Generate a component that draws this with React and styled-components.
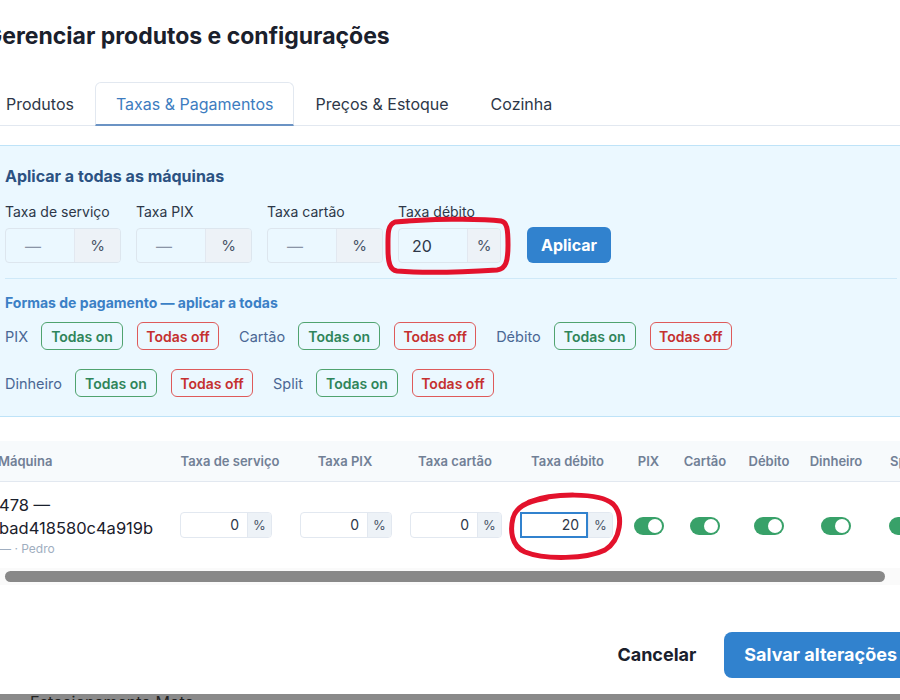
import React from 'react'
import styled, { createGlobalStyle, css } from 'styled-components'

const GlobalStyle = createGlobalStyle`
  html, body {
    margin: 0;
    padding: 0;
    background: #ffffff;
    overflow: hidden;
    font-family: Inter, "Noto Sans", "Liberation Sans", sans-serif;
    color: #1a202c;
  }
  * { box-sizing: border-box; }
`

const Page = styled.div`
  width: 900px;
  height: 700px;
  overflow: hidden;
`

const Modal = styled.div`
  width: 932px;
  margin-left: -15px;
  padding: 22px 0 18px;
  background: #fff;
`

const Title = styled.h2`
  margin: 0;
  font-size: 23px;
  line-height: 28px;
  font-weight: 700;
  color: #1a202c;
`

const TabList = styled.div`
  display: flex;
  margin-top: 32px;
  border-bottom: 1px solid #e2e8f0;
`

const Tab = styled.div`
  height: 44px;
  display: flex;
  align-items: center;
  padding: 0 20px;
  font-size: 16px;
  color: #2d3748;
  border: 1px solid transparent;
  border-radius: 6px 6px 0 0;
  margin-bottom: -1px;
  ${p => p.$active && css`
    color: #3d7cc0;
    border-color: #e2e8f0;
    border-bottom: 2px solid #6b93c4;
    background: #fff;
  `}
`

const Panel = styled.section`
  margin-top: 19px;
  background: #ebf8ff;
  border-top: 1px solid #bee3f8;
  border-bottom: 1px solid #bee3f8;
  padding: 20px 20px 19px;
`

const PanelTitle = styled.h3`
  margin: 0;
  font-size: 16px;
  line-height: 20px;
  font-weight: 700;
  color: #2c5282;
`

const FieldRow = styled.div`
  display: flex;
  align-items: flex-end;
  gap: 15px;
  margin-top: 18px;
`

const Field = styled.div`
  position: relative;
  display: flex;
  flex-direction: column;
  gap: 8px;
  width: ${p => p.$w || 116}px;
`

const Label = styled.span`
  font-size: 14px;
  line-height: 16px;
  color: #2d3748;
  white-space: nowrap;
`

const InputGroup = styled.div`
  display: flex;
  height: ${p => (p.$small ? 26 : 35)}px;
  width: ${p => p.$w}px;
  border: 1px solid ${p => (p.$small ? '#e2e8f0' : '#dde6ee')};
  border-radius: 4px;
  background: ${p => (p.$small ? '#fff' : 'transparent')};
`

const Input = styled.div`
  flex: 1;
  display: flex;
  align-items: center;
  font-size: ${p => (p.$small ? 14 : 16)}px;
  color: ${p => (p.$placeholder ? '#8a94a6' : '#2d3748')};
  ${p => p.$small
    ? css`justify-content: flex-end; padding-right: 8px;`
    : css`padding-left: ${p.$placeholder ? 19 : 13}px;`}
  ${p => p.$focus && css`
    border: 2px solid #3182ce;
    margin: -1px 0 -1px -1px;
    padding-right: 7px;
  `}
`

const Addon = styled.div`
  width: ${p => p.$w || (p.$small ? 24 : 46)}px;
  display: flex;
  align-items: center;
  justify-content: center;
  background: #edf2f7;
  border-left: 1px solid #e2e8f0;
  border-radius: 0 3px 3px 0;
  font-size: ${p => (p.$small ? 13 : 15)}px;
  color: #4a5568;
`

const PrimaryButton = styled.button`
  border: none;
  background: #3182ce;
  color: #fff;
  font-family: inherit;
  font-weight: 700;
  font-size: ${p => (p.$big ? 18 : 16)}px;
  height: ${p => (p.$big ? 46 : 36)}px;
  padding: 0 ${p => (p.$big ? 20 : 14)}px;
  border-radius: ${p => (p.$big ? 8 : 6)}px;
  margin-left: ${p => (p.$big ? 0 : 11)}px;
`

const Divider = styled.hr`
  margin: 15px 0 0;
  border: none;
  border-top: 1px solid #cfe9f8;
`

const SubTitle = styled.div`
  margin-top: 15px;
  font-size: 14px;
  line-height: 18px;
  font-weight: 700;
  color: #3b80c6;
`

const PayRows = styled.div`
  display: flex;
  flex-wrap: wrap;
  column-gap: 20px;
  row-gap: 19px;
  margin-top: 10px;
`

const PayItem = styled.div`
  display: flex;
  align-items: center;
  gap: 14px;
`

const PayLabel = styled.span`
  font-size: 14.5px;
  color: #4a6794;
  margin-right: -1px;
`

const BulkButton = styled.button`
  width: 82px;
  height: 28px;
  padding: 0;
  border-radius: 6px;
  background: transparent;
  font-family: inherit;
  font-size: 14px;
  font-weight: 600;
  border: 1.5px solid ${p => (p.$on ? '#4fa36f' : '#de5a5a')};
  color: ${p => (p.$on ? '#2f855a' : '#c53030')};
`

const TableWrap = styled.div`
  margin-top: 24px;
  overflow: hidden;
`

const Table = styled.table`
  width: 951px;
  table-layout: fixed;
  border-collapse: collapse;
`

const Th = styled.th`
  height: 40px;
  padding: 0 ${p => (p.$left ? 13 : 2)}px;
  background: #f7fafc;
  border-bottom: 1px solid #e2e8f0;
  font-size: 13px;
  font-weight: 600;
  color: #718096;
  text-align: ${p => (p.$left ? 'left' : 'center')};
  white-space: nowrap;
`

const Td = styled.td`
  position: relative;
  padding: ${p => (p.$left ? '12px 12px 10px 14px' : p.$input ? '0 0 0 10px' : '0')};
  text-align: ${p => (p.$center ? 'center' : 'left')};
  vertical-align: middle;
`

const MachineName = styled.div`
  font-size: 16.5px;
  line-height: 23px;
  color: #1a202c;
`

const MachineSub = styled.div`
  font-size: 12px;
  line-height: 18px;
  color: #a0aec0;
`

const Toggle = styled.span`
  display: inline-block;
  position: relative;
  width: 30px;
  height: 18px;
  border-radius: 9px;
  background: #38a169;
  vertical-align: middle;
  &::after {
    content: '';
    position: absolute;
    top: 2px;
    left: 14px;
    width: 14px;
    height: 14px;
    border-radius: 50%;
    background: #fff;
  }
`

const ScrollTrack = styled.div`
  height: 17px;
  background: #fafafa;
  padding: 3px 0 3px 20px;
`

const ScrollThumb = styled.div`
  width: 880px;
  height: 11px;
  border-radius: 6px;
  background: #888;
`

const Footer = styled.div`
  display: flex;
  justify-content: flex-end;
  align-items: center;
  gap: 8px;
  margin-top: 47px;
`

const GhostButton = styled.button`
  height: 46px;
  padding: 0 20px;
  border: none;
  background: transparent;
  font-family: inherit;
  font-size: 18px;
  font-weight: 700;
  color: #1a202c;
`

const Backdrop = styled.div`
  height: 40px;
  background: #8a8a8a;
  padding-left: 30px;
  font-size: 16px;
  line-height: 16px;
  color: #222;
  & > span { display: block; margin-top: -2px; }
`

const Mark = styled.svg`
  position: absolute;
  left: ${p => p.$x}px;
  top: ${p => p.$y}px;
  pointer-events: none;
  overflow: visible;
`

const RectMark = () => (
  <Mark $x={-13} $y={13} width="126" height="58" viewBox="0 0 126 58">
    <path
      d="M10 5 C40 2 95 1 116 4 C122 5 123 12 123 28 C123 44 121 52 112 53 C80 55 35 56 12 54 C5 53 3 46 3 32 C3 18 2 8 10 5 L24 4"
      fill="none" stroke="#e3122c" strokeWidth="5" strokeLinecap="round" strokeLinejoin="round"
    />
  </Mark>
)

const OvalMark = () => (
  <Mark $x={-3} $y={8} width="118" height="72" viewBox="0 0 118 72">
    <path
      d="M22 12 C45 3 92 2 106 14 C117 25 114 50 98 60 C80 69 38 70 18 62 C4 56 3 40 6 28 C8 20 14 14 30 10 L40 8"
      fill="none" stroke="#e3122c" strokeWidth="5" strokeLinecap="round" strokeLinejoin="round"
    />
  </Mark>
)

const tabs = ['Produtos', 'Taxas & Pagamentos', 'Preços & Estoque', 'Cozinha']
const fees = [
  { label: 'Taxa de serviço', value: '' },
  { label: 'Taxa PIX', value: '' },
  { label: 'Taxa cartão', value: '' },
  { label: 'Taxa débito', value: '20', mark: true },
]
const methods = ['PIX', 'Cartão', 'Débito', 'Dinheiro', 'Split']
const cols = [185, 120, 110, 110, 115, 47, 66, 62, 72, 64]
const headers = ['Máquina', 'Taxa de serviço', 'Taxa PIX', 'Taxa cartão', 'Taxa débito', ...methods]
const rowFees = [
  { value: '0' },
  { value: '0' },
  { value: '0' },
  { value: '20', focus: true },
]

const App = () => {
  return (
    <Page>
      <GlobalStyle />
      <Modal>
        <Title>Gerenciar produtos e configurações</Title>

        <TabList>
          {tabs.map((t, i) => (
            <Tab key={t} $active={i === 1}>{t}</Tab>
          ))}
        </TabList>

        <Panel>
          <PanelTitle>Aplicar a todas as máquinas</PanelTitle>
          <FieldRow>
            {fees.map(f => (
              <Field key={f.label} $w={f.mark ? 103 : 116}>
                <Label>{f.label}</Label>
                <InputGroup $w={f.mark ? 103 : 116}>
                  <Input $placeholder={!f.value}>{f.value || '—'}</Input>
                  <Addon $w={f.mark ? 33 : undefined}>%</Addon>
                </InputGroup>
                {f.mark && <RectMark />}
              </Field>
            ))}
            <PrimaryButton>Aplicar</PrimaryButton>
          </FieldRow>

          <Divider />
          <SubTitle>Formas de pagamento — aplicar a todas</SubTitle>
          <PayRows>
            {methods.map(m => (
              <PayItem key={m}>
                <PayLabel>{m}</PayLabel>
                <BulkButton $on>Todas on</BulkButton>
                <BulkButton>Todas off</BulkButton>
              </PayItem>
            ))}
          </PayRows>
        </Panel>

        <TableWrap>
          <Table>
            <colgroup>
              {cols.map((w, i) => <col key={i} style={{ width: w }} />)}
            </colgroup>
            <thead>
              <tr>
                {headers.map((h, i) => (
                  <Th key={h} $left={i === 0}>{h}</Th>
                ))}
              </tr>
            </thead>
            <tbody>
              <tr>
                <Td $left>
                  <MachineName>478 — bad418580c4a919b</MachineName>
                  <MachineSub>— · Pedro</MachineSub>
                </Td>
                {rowFees.map((f, i) => (
                  <Td key={i} $input>
                    <InputGroup $small $w={f.focus ? 93 : 92}>
                      <Input $small $focus={f.focus}>{f.value}</Input>
                      <Addon $small>%</Addon>
                    </InputGroup>
                    {f.focus && <OvalMark />}
                  </Td>
                ))}
                {methods.map(m => (
                  <Td key={m} $center><Toggle /></Td>
                ))}
              </tr>
            </tbody>
          </Table>
          <ScrollTrack><ScrollThumb /></ScrollTrack>
        </TableWrap>

        <Footer>
          <GhostButton>Cancelar</GhostButton>
          <PrimaryButton $big>Salvar alterações</PrimaryButton>
        </Footer>
      </Modal>
      <Backdrop><span>Estacionamento Moto</span></Backdrop>
    </Page>
  )
}

export default App
